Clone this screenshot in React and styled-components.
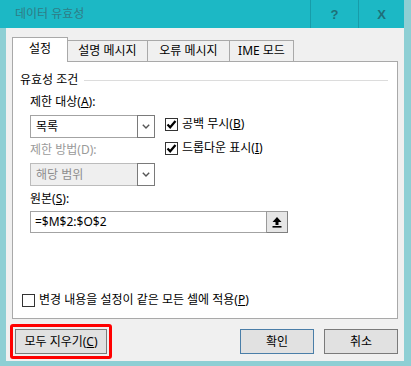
import React from "react";
import styled, { createGlobalStyle } from "styled-components";

const Global = createGlobalStyle`
  html, body { margin: 0; padding: 0; }
  body {
    font-family: "Noto Sans", "Noto Sans CJK KR", sans-serif;
    font-size: 12px;
    color: #000;
  }
`;

const Frame = styled.div`
  width: 411px;
  height: 366px;
  background: #8ecfd4;
  box-sizing: border-box;
  overflow: hidden;
`;

const TitleBar = styled.div`
  width: 404px;
  height: 28px;
  background: #1cb8c5;
  display: flex;
  align-items: center;
`;

const Title = styled.div`
  flex: 1;
  padding-left: 15px;
  color: #2f7c86;
  font-size: 12px;
  line-height: 16px;
`;

const TitleButton = styled.div`
  width: ${(p) => p.$w}px;
  height: 28px;
  border-left: 1px solid #179ca9;
  display: flex;
  align-items: center;
  justify-content: center;
  color: #1f6f78;
  font-weight: bold;
  font-family: "Liberation Sans", Arial, sans-serif;
  font-size: 13px;
`;

const Body = styled.div`
  margin-left: 6px;
  width: 398px;
  height: 333px;
  background: #f0f0f0;
  box-sizing: border-box;
  padding: 9px 6px 0 6px;
  display: flex;
  flex-direction: column;
`;

const TabStrip = styled.div`
  display: flex;
  align-items: flex-end;
  height: 25px;
  position: relative;
  z-index: 1;
  margin-bottom: -1px;
`;

const Tab = styled.div`
  box-sizing: border-box;
  width: ${(p) => p.$w}px;
  height: ${(p) => (p.$active ? 25 : 22)}px;
  margin-left: ${(p) => (p.$first ? 0 : -1)}px;
  border: 1px solid #a9a9a9;
  border-bottom: ${(p) => (p.$active ? "none" : "1px solid #a9a9a9")};
  background: ${(p) => (p.$active ? "#fff" : "#f0f0f0")};
  display: flex;
  align-items: center;
  justify-content: center;
  padding-bottom: ${(p) => (p.$active ? 2 : 0)}px;
  line-height: 16px;
  position: relative;
  z-index: ${(p) => (p.$active ? 2 : 1)};
`;

const Panel = styled.div`
  box-sizing: border-box;
  width: 386px;
  height: 258px;
  background: #fff;
  border: 1px solid #a9a9a9;
  padding: 10px 8px 10px 7px;
  display: flex;
  flex-direction: column;
`;

const GroupHead = styled.div`
  display: flex;
  align-items: center;
  gap: 6px;
  line-height: 16px;
  margin-right: 1px;
`;

const GroupLine = styled.div`
  flex: 1;
  height: 1px;
  background: #dcdcdc;
  margin-top: 1px;
`;

const Indented = styled.div`
  padding-left: 10px;
  display: flex;
  flex-direction: column;
`;

const TwoCol = styled.div`
  display: flex;
  margin-top: 6px;
`;

const LeftCol = styled.div`
  width: 125px;
  display: flex;
  flex-direction: column;
`;

const RightCol = styled.div`
  margin-left: 10px;
  padding-top: 22px;
  display: flex;
  flex-direction: column;
  gap: 8px;
`;

const Label = styled.div`
  line-height: 16px;
  color: ${(p) => (p.$disabled ? "#9a9a9a" : "#000")};
  margin-top: ${(p) => p.$mt || 0}px;
`;

const U = styled.span`
  text-decoration: underline;
  text-underline-offset: 1px;
`;

const Select = styled.div`
  box-sizing: border-box;
  width: 125px;
  height: 23px;
  margin-top: ${(p) => p.$mt || 0}px;
  border: 1px solid ${(p) => (p.$disabled ? "#bcbcbc" : "#a3a3a3")};
  background: ${(p) => (p.$disabled ? "#efefef" : "#fff")};
  display: flex;
  align-items: center;
  color: ${(p) => (p.$disabled ? "#8d8d8d" : "#000")};
`;

const SelectText = styled.div`
  flex: 1;
  padding-left: 5px;
  line-height: 16px;
`;

const Arrow = styled.div`
  box-sizing: border-box;
  width: 18px;
  height: 23px;
  margin: -1px -1px -1px 0;
  border: 1px solid #7a7a7a;
  background: #fff;
  display: flex;
  align-items: center;
  justify-content: center;
`;

const CheckRow = styled.div`
  display: flex;
  align-items: center;
  gap: 4px;
  line-height: 16px;
  margin-left: ${(p) => p.$ml || 0}px;
`;

const Box = styled.div`
  box-sizing: border-box;
  width: 13px;
  height: 13px;
  border: 1px solid #333;
  background: #fff;
  display: flex;
  align-items: center;
  justify-content: center;
`;

const InputBox = styled.div`
  box-sizing: border-box;
  width: 258px;
  height: 22px;
  margin-top: 4px;
  border: 1px solid #a3a3a3;
  background: #fff;
  display: flex;
  align-items: center;
`;

const InputText = styled.div`
  flex: 1;
  padding-left: 4px;
  line-height: 16px;
`;

const PickButton = styled.div`
  box-sizing: border-box;
  width: 22px;
  height: 22px;
  margin: -1px -1px -1px 0;
  border: 1px solid #9a9a9a;
  border-right-color: #7f7f7f;
  border-bottom-color: #7f7f7f;
  background: #e6e6e6;
  display: flex;
  align-items: center;
  justify-content: center;
`;

const Spacer = styled.div`
  flex: 1;
`;

const ButtonRow = styled.div`
  display: flex;
  align-items: center;
  margin-top: 5px;
`;

const Highlight = styled.div`
  border: 3px solid #ff0000;
  border-radius: 3px;
  padding: 2px;
  margin-left: -2px;
`;

const Button = styled.div`
  box-sizing: border-box;
  width: ${(p) => p.$w}px;
  height: 25px;
  border: 1px solid ${(p) => (p.$default ? "#4a7ea8" : "#7a7a7a")};
  background: #e1e1e1;
  display: flex;
  align-items: center;
  justify-content: center;
  line-height: 16px;
  margin-left: ${(p) => p.$ml || 0}px;
`;

const Chevron = () => (
  <svg width="8" height="5" viewBox="0 0 8 5">
    <polyline points="0.8,0.8 4,4 7.2,0.8" fill="none" stroke="#555" strokeWidth="1.4" />
  </svg>
);

const Check = () => (
  <svg width="11" height="11" viewBox="0 0 11 11">
    <polyline points="1.5,5.5 4.2,8.3 9.5,2" fill="none" stroke="#000" strokeWidth="2.2" />
  </svg>
);

const CheckBox = ({ checked, children, ml }) => (
  <CheckRow $ml={ml}>
    <Box>{checked && <Check />}</Box>
    <span>{children}</span>
  </CheckRow>
);

const UpIcon = () => (
  <svg width="10" height="12" viewBox="0 0 10 12">
    <polygon points="5,1 9.5,6 6.5,6 6.5,9 3.5,9 3.5,6 0.5,6" fill="#000" />
    <rect x="0.5" y="10" width="9" height="1.6" fill="#000" />
  </svg>
);

export default function App() {
  return (
    <>
      <Global />
      <Frame>
        <TitleBar>
          <Title>데이터 유효성</Title>
          <TitleButton $w={47}>?</TitleButton>
          <TitleButton $w={45}>X</TitleButton>
        </TitleBar>
        <Body>
          <TabStrip>
            <Tab $active $first $w={56}>설정</Tab>
            <Tab $w={81}>설명 메시지</Tab>
            <Tab $w={83}>오류 메시지</Tab>
            <Tab $w={65}>IME 모드</Tab>
          </TabStrip>
          <Panel>
            <GroupHead>
              <span>유효성 조건</span>
              <GroupLine />
            </GroupHead>
            <Indented>
              <TwoCol>
                <LeftCol>
                  <Label>
                    제한 대상(<U>A</U>):
                  </Label>
                  <Select $mt={5}>
                    <SelectText>목록</SelectText>
                    <Arrow>
                      <Chevron />
                    </Arrow>
                  </Select>
                  <Label $disabled $mt={4}>
                    제한 방법(D):
                  </Label>
                  <Select $disabled $mt={5}>
                    <SelectText>해당 범위</SelectText>
                    <Arrow>
                      <Chevron />
                    </Arrow>
                  </Select>
                </LeftCol>
                <RightCol>
                  <CheckBox checked>
                    공백 무시(<U>B</U>)
                  </CheckBox>
                  <CheckBox checked>
                    드롭다운 표시(<U>I</U>)
                  </CheckBox>
                </RightCol>
              </TwoCol>
              <Label $mt={5}>
                원본(<U>S</U>):
              </Label>
              <InputBox>
                <InputText>=$M$2:$O$2</InputText>
                <PickButton>
                  <UpIcon />
                </PickButton>
              </InputBox>
            </Indented>
            <Spacer />
            <CheckBox ml={2}>
              변경 내용을 설정이 같은 모든 셀에 적용(<U>P</U>)
            </CheckBox>
          </Panel>
          <ButtonRow>
            <Highlight>
              <Button $w={92}>
                모두 지우기(<U>C</U>)
              </Button>
            </Highlight>
            <Spacer />
            <Button $default $w={74}>확인</Button>
            <Button $w={74} $ml={10}>취소</Button>
          </ButtonRow>
        </Body>
      </Frame>
    </>
  );
}
